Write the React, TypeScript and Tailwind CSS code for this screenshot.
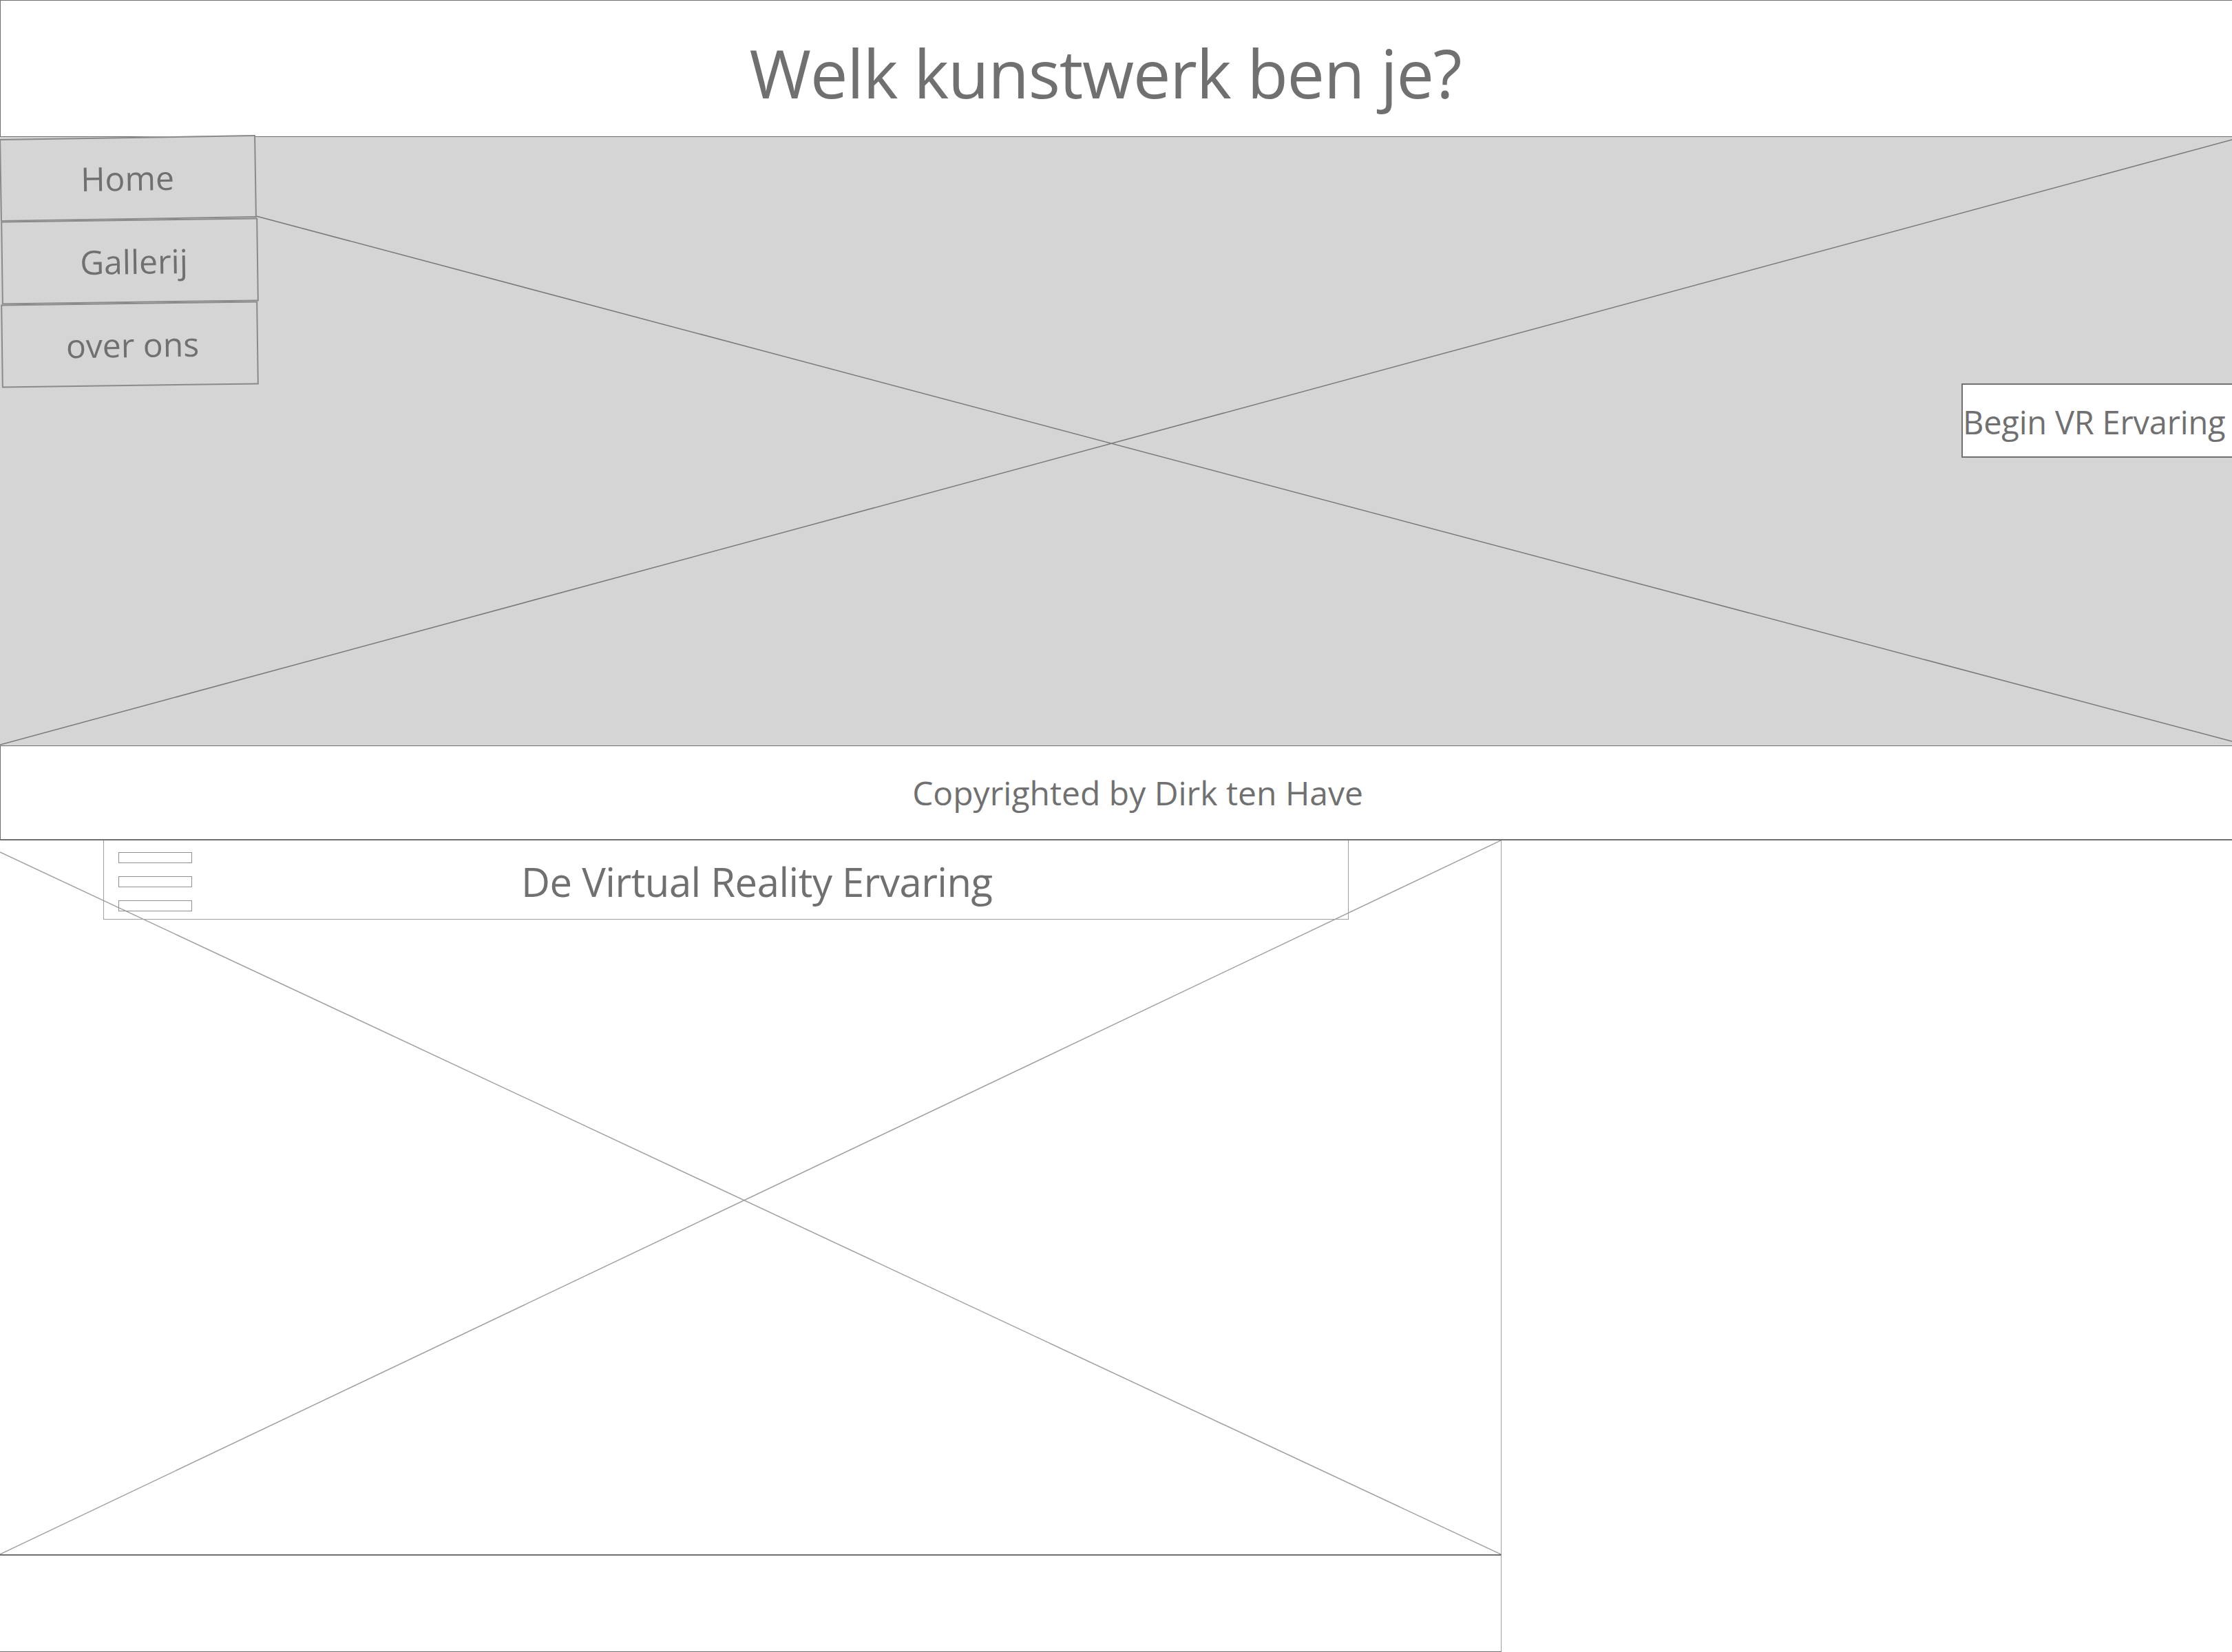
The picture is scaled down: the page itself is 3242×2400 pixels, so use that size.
const font = { fontFamily: '"Open Sans", "Noto Sans", sans-serif' };

function Cross({
  w,
  h,
  a,
  b,
  stroke,
}: {
  w: number;
  h: number;
  a: [number, number, number, number];
  b: [number, number, number, number];
  stroke: string;
}) {
  return (
    <svg
      className="absolute inset-0 h-full w-full"
      viewBox={`0 0 ${w} ${h}`}
      preserveAspectRatio="none"
    >
      <line x1={a[0]} y1={a[1]} x2={a[2]} y2={a[3]} stroke={stroke} strokeWidth={1.5} />
      <line x1={b[0]} y1={b[1]} x2={b[2]} y2={b[3]} stroke={stroke} strokeWidth={1.5} />
    </svg>
  );
}

const navItems = [
  { label: "Home", cls: "w-[372px] h-[120px] -rotate-[0.9deg] pr-[2px]" },
  { label: "Gallerij", cls: "ml-[2px] w-[373px] h-[121px] -rotate-[0.8deg] pl-[12px]" },
  { label: "over ons", cls: "ml-[2px] w-[373px] h-[121px] -rotate-[0.8deg] pl-[8px]" },
];

export default function App() {
  return (
    <div
      className="relative w-[3242px] h-[2400px] overflow-hidden bg-white text-[#707070]"
      style={font}
    >
      <header className="flex h-[199px] items-center justify-center border-t border-l border-b border-[#707070] pt-[12px] pr-[32px]">
        <h1 className="text-[97px] leading-none font-normal tracking-[-1.2px]">
          Welk kunstwerk ben je?
        </h1>
      </header>

      <section className="relative h-[884px] bg-[#d5d5d5]">
        <Cross
          w={3242}
          h={884}
          a={[0, 16, 3242, 878]}
          b={[0, 883, 3242, 4]}
          stroke="#7a7a7a"
        />
        <div className="relative flex justify-between">
          <nav className="flex flex-col">
            {navItems.map((item) => (
              <button
                key={item.label}
                className={`flex items-center justify-center border-2 border-[#8a8a8a] bg-[#d5d5d5] text-[48px] leading-none text-[#707070] ${item.cls}`}
              >
                {item.label}
              </button>
            ))}
          </nav>
          <button className="mt-[358px] mr-[-60px] flex h-[108px] w-[453px] items-center whitespace-nowrap border-2 border-[#707070] bg-white pt-[4px] text-[47px] leading-none tracking-[-0.2px] text-[#707070]">
            Begin VR Ervaring
          </button>
        </div>
      </section>

      <footer className="flex h-[138px] items-center justify-center border-t border-l border-b-2 border-[#707070] pl-[62px] text-[48px]">
        Copyrighted by Dirk ten Have
      </footer>

      <div className="flex w-[2181px] flex-col">
        <div className="relative h-[1037px] border-r border-[#a0a0a0]">
          <Cross
            w={2180}
            h={1037}
            a={[0, 17, 2180, 1037]}
            b={[0, 1037, 2180, 0]}
            stroke="#a0a0a0"
          />
          <div className="relative ml-[150px] flex h-[115px] w-[1809px] items-center border border-t-0 border-[#a0a0a0] pt-[6px]">
            <div className="ml-[21px] flex flex-col gap-[19px]">
              <span className="block h-[16px] w-[107px] border border-[#909090]" />
              <span className="block h-[16px] w-[107px] border border-[#909090]" />
              <span className="block h-[16px] w-[107px] border border-[#909090]" />
            </div>
            <span className="ml-[478px] text-[58px] leading-none tracking-[-0.5px]">
              De Virtual Reality Ervaring
            </span>
          </div>
        </div>
        <div className="h-[142px] border-t-2 border-r border-b border-[#707070] border-r-[#a0a0a0]" />
      </div>
    </div>
  );
}
